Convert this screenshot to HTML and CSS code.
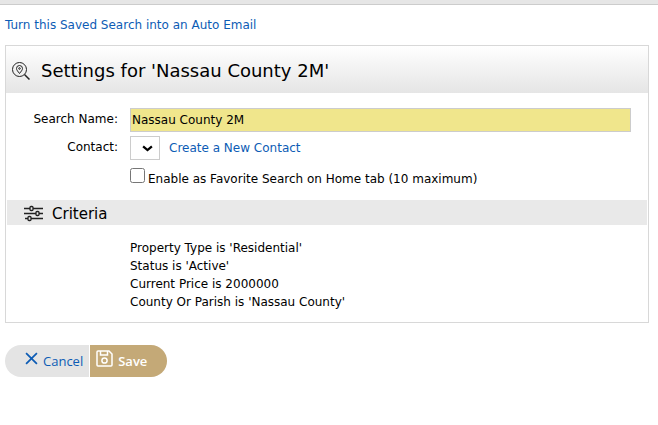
FILE: index.html
```html
<!DOCTYPE html>
<html lang="en">
<head>
<meta charset="utf-8">
<title>Saved Search Settings</title>
<link rel="stylesheet" href="styles.css">
</head>
<body>
<div class="topbar"></div>
<main class="page">
  <a class="link auto-email" href="#">Turn this Saved Search into an Auto Email</a>
  <form class="settings">
    <section class="panel">
      <header class="panel-header">
        <svg class="search-icon" viewBox="0 0 20 20" fill="none" stroke="#222" aria-hidden="true">
          <circle cx="8.500" cy="8.500" r="7"/>
          <path d="M13.500 13.500l5 5" stroke-width="1.500"/>
          <path d="M8.500 12.500C7 10.500 5.500 9 5.500 7.500a3 3 0 0 1 6 0c0 1.500-1.500 3-3 5z"/>
          <circle cx="8.500" cy="7.500" r=".8"/>
        </svg>
        <h1 class="title">Settings for 'Nassau County 2M'</h1>
      </header>
      <div class="fields">
        <label class="label" for="name">Search Name:</label>
        <input class="text-input" id="name" type="text" value="Nassau County 2M">
        <label class="label" for="contact">Contact:</label>
        <div class="contact">
          <div class="select-wrap">
            <select class="select" id="contact"><option></option></select>
            <svg class="chevron" viewBox="0 0 10 6" fill="none" stroke="#000" stroke-width="2" aria-hidden="true"><path d="M1 1l4 3.500L9 1"/></svg>
          </div>
          <a class="link" href="#">Create a New Contact</a>
        </div>
        <div class="favorite">
          <input class="checkbox" id="favorite" type="checkbox">
          <label for="favorite">Enable as Favorite Search on Home tab (10 maximum)</label>
        </div>
      </div>
      <div class="criteria-header">
        <svg class="sliders-icon" viewBox="0 0 20 18" fill="none" stroke="#222" stroke-width="1.300" aria-hidden="true">
          <path d="M0 3.500h6M9 3.500h10M0 8.500h12M15 8.500h4M1 13.500h3M7 13.500h12"/>
          <rect x="6" y="1.500" width="3" height="4" rx="1"/>
          <rect x="12" y="6.500" width="3" height="4" rx="1"/>
          <rect x="4" y="11.500" width="3" height="4" rx="1"/>
        </svg>
        <h2 class="subtitle">Criteria</h2>
      </div>
      <ul class="criteria">
        <li>Property Type is 'Residential'</li>
        <li>Status is 'Active'</li>
        <li>Current Price is 2000000</li>
        <li>County Or Parish is 'Nassau County'</li>
      </ul>
    </section>
    <div class="actions">
      <button class="button cancel" type="button">
        <svg class="cancel-icon" viewBox="0 0 12 12" fill="none" stroke="currentColor" stroke-width="1.600" aria-hidden="true"><path d="M1 1l10 10M11 1L1 11"/></svg>
        Cancel
      </button>
      <button class="button save" type="submit">
        <svg class="save-icon" viewBox="0 0 17 17" fill="none" stroke="currentColor" stroke-width="1.500" aria-hidden="true">
          <path d="M2 1h11l3 3v11a1 1 0 0 1-1 1H2a1 1 0 0 1-1-1V2a1 1 0 0 1 1-1z"/>
          <path d="M4.500 1v4h7V1"/>
          <circle cx="8.500" cy="10.500" r="2.600"/>
        </svg>
        Save
      </button>
    </div>
  </form>
</main>
</body>
</html>
```
FILE: styles.css
```css
* {
  box-sizing: border-box;
}

body {
  margin: 0;
  background: #fff;
  color: #000;
  font: 12px/18px "DejaVu Sans", Verdana, sans-serif;
}

.topbar {
  height: 5px;
  background: #e6e6e6;
  border-bottom: 1px solid #ccc;
}

.page {
  padding: 11px 9px 0 5px;
}

.link {
  color: #0d5cb5;
  text-decoration: none;
}

.auto-email {
  display: block;
}

.panel {
  margin-top: 11px;
  border: 1px solid #d8d8d8;
}

.panel-header {
  display: flex;
  align-items: center;
  gap: 10px;
  height: 47px;
  padding: 2px 5px 0;
  background: linear-gradient(#fff, #e5e5e5);
}

.search-icon {
  width: 20px;
  height: 20px;
}

.title {
  margin: 0;
  font-size: 18px;
  font-weight: 400;
}

.fields {
  display: grid;
  grid-template-columns: 112px 1fr;
  gap: 4px 12px;
  padding: 15px 17px 12px 0;
}

.label {
  padding-top: 2px;
  text-align: right;
}

.text-input {
  width: 100%;
  height: 24px;
  padding: 0 1px;
  border: 1px solid #ccc;
  background: #f0e68c;
  color: #000;
  font: inherit;
}

.contact {
  display: flex;
  align-items: center;
  gap: 9px;
}

.select-wrap {
  position: relative;
  width: 30px;
  height: 24px;
}

.select {
  width: 100%;
  height: 100%;
  border: 1px solid #ccc;
  background: #fff;
  appearance: none;
}

.chevron {
  position: absolute;
  top: 9px;
  right: 7px;
  width: 11px;
  height: 7px;
  pointer-events: none;
}

.favorite {
  grid-column: 2;
  display: flex;
  gap: 3px;
  padding-top: 4px;
}

.favorite label {
  padding-top: 2px;
}

.checkbox {
  width: 15px;
  height: 15px;
  margin: 0;
}

.criteria-header {
  display: flex;
  align-items: center;
  gap: 8px;
  height: 25px;
  margin: 0 1px;
  padding: 3px 17px 0;
  background: #e9e9e9;
}

.sliders-icon {
  width: 20px;
  height: 18px;
}

.subtitle {
  margin: 0;
  font-size: 15px;
  font-weight: 400;
}

.criteria {
  margin: 0;
  padding: 14px 17px 11px 124px;
  list-style: none;
}

.actions {
  display: flex;
  gap: 1px;
  margin-top: 22px;
}

.button {
  display: flex;
  align-items: center;
  height: 32px;
  border: 0;
  font: 600 13px/18px "Open Sans", sans-serif;
}

.cancel {
  gap: 5px;
  padding: 0 6px 1px 20px;
  border-radius: 16px 0 0 16px;
  background: #e4e4e4;
  color: #0d5cb5;
  font-weight: 400;
}

.save {
  gap: 5px;
  padding: 0 20px 1px 6px;
  border-radius: 0 16px 16px 0;
  background: #c4a977;
  color: #fff;
}

.cancel-icon {
  width: 13px;
  height: 13px;
  margin-bottom: 4px;
}

.save-icon {
  width: 17px;
  height: 17px;
  margin-bottom: 4px;
}
```
